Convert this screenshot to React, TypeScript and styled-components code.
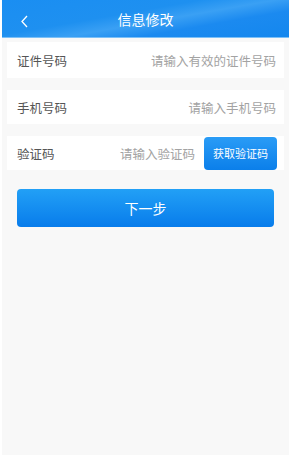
import styled, { createGlobalStyle } from 'styled-components';

const Global = createGlobalStyle`
html, body {
    margin:0;
    padding:0;
    background:#fff;
}
#root{
    height:457px;
}
`

const Page = styled.div`
margin:0 1px 0 2px;
height:455px;
background:#f8f8f8;
display:flex;
flex-direction:column;
font-family: "Noto Sans CJK SC", "Noto Sans", sans-serif;
`

const Header = styled.div`
height:37px;
position:relative;
display:flex;
align-items:center;
justify-content:center;
background: linear-gradient(170deg, #1a8ef2 0%, #1e90f0 40%, #3aa0f4 55%, #1b8af0 70%, #1487ee 100%);
border-bottom:1px solid #7cc0f7;
color:#fff;
font-size:14px;
`

const Back = styled.div`
position:absolute;
left:16px;
top:12px;
width:14px;
height:14px;
`

const Form = styled.div`
display:flex;
flex-direction:column;
gap:12px;
padding:4px 5px 0;
`

const Row = styled.div<{ $h: number }>`
height:${p => p.$h}px;
background:#fff;
display:flex;
align-items:center;
padding:0 8px 0 10px;
font-size:12.5px;
`

const Label = styled.span`
color:#555;
flex:1;
`

const Hint = styled.span`
color:#a3a3a3;
`

const CodeBtn = styled.div`
margin-left:9px;
margin-right:-1px;
width:73px;
height:33px;
border-radius:4px;
background:linear-gradient(180deg, #2a9cf6, #0b7fea);
color:#fff;
font-size:11px;
display:flex;
align-items:center;
justify-content:center;
`

const NextBtn = styled.div`
margin:19px 15px 0;
height:38px;
border-radius:4px;
background:linear-gradient(180deg, #22a0f6, #087ceb);
color:#fff;
font-size:14px;
display:flex;
align-items:center;
justify-content:center;
`

export default function App() {
    return (
        <>
            <Global />
            <Page>
                <Header>
                    <Back>
                        <svg width="14" height="14" viewBox="0 0 14 14">
                            <path d="M9 2 L4 7.5 L9 13" stroke="#fff" strokeWidth="1.3" fill="none" />
                        </svg>
                    </Back>
                    信息修改
                </Header>
                <Form>
                    <Row $h={36}>
                        <Label>证件号码</Label>
                        <Hint>请输入有效的证件号码</Hint>
                    </Row>
                    <Row $h={34}>
                        <Label>手机号码</Label>
                        <Hint>请输入手机号码</Hint>
                    </Row>
                    <Row $h={34}>
                        <Label>验证码</Label>
                        <Hint>请输入验证码</Hint>
                        <CodeBtn>获取验证码</CodeBtn>
                    </Row>
                </Form>
                <NextBtn>下一步</NextBtn>
            </Page>
        </>
    );
}
